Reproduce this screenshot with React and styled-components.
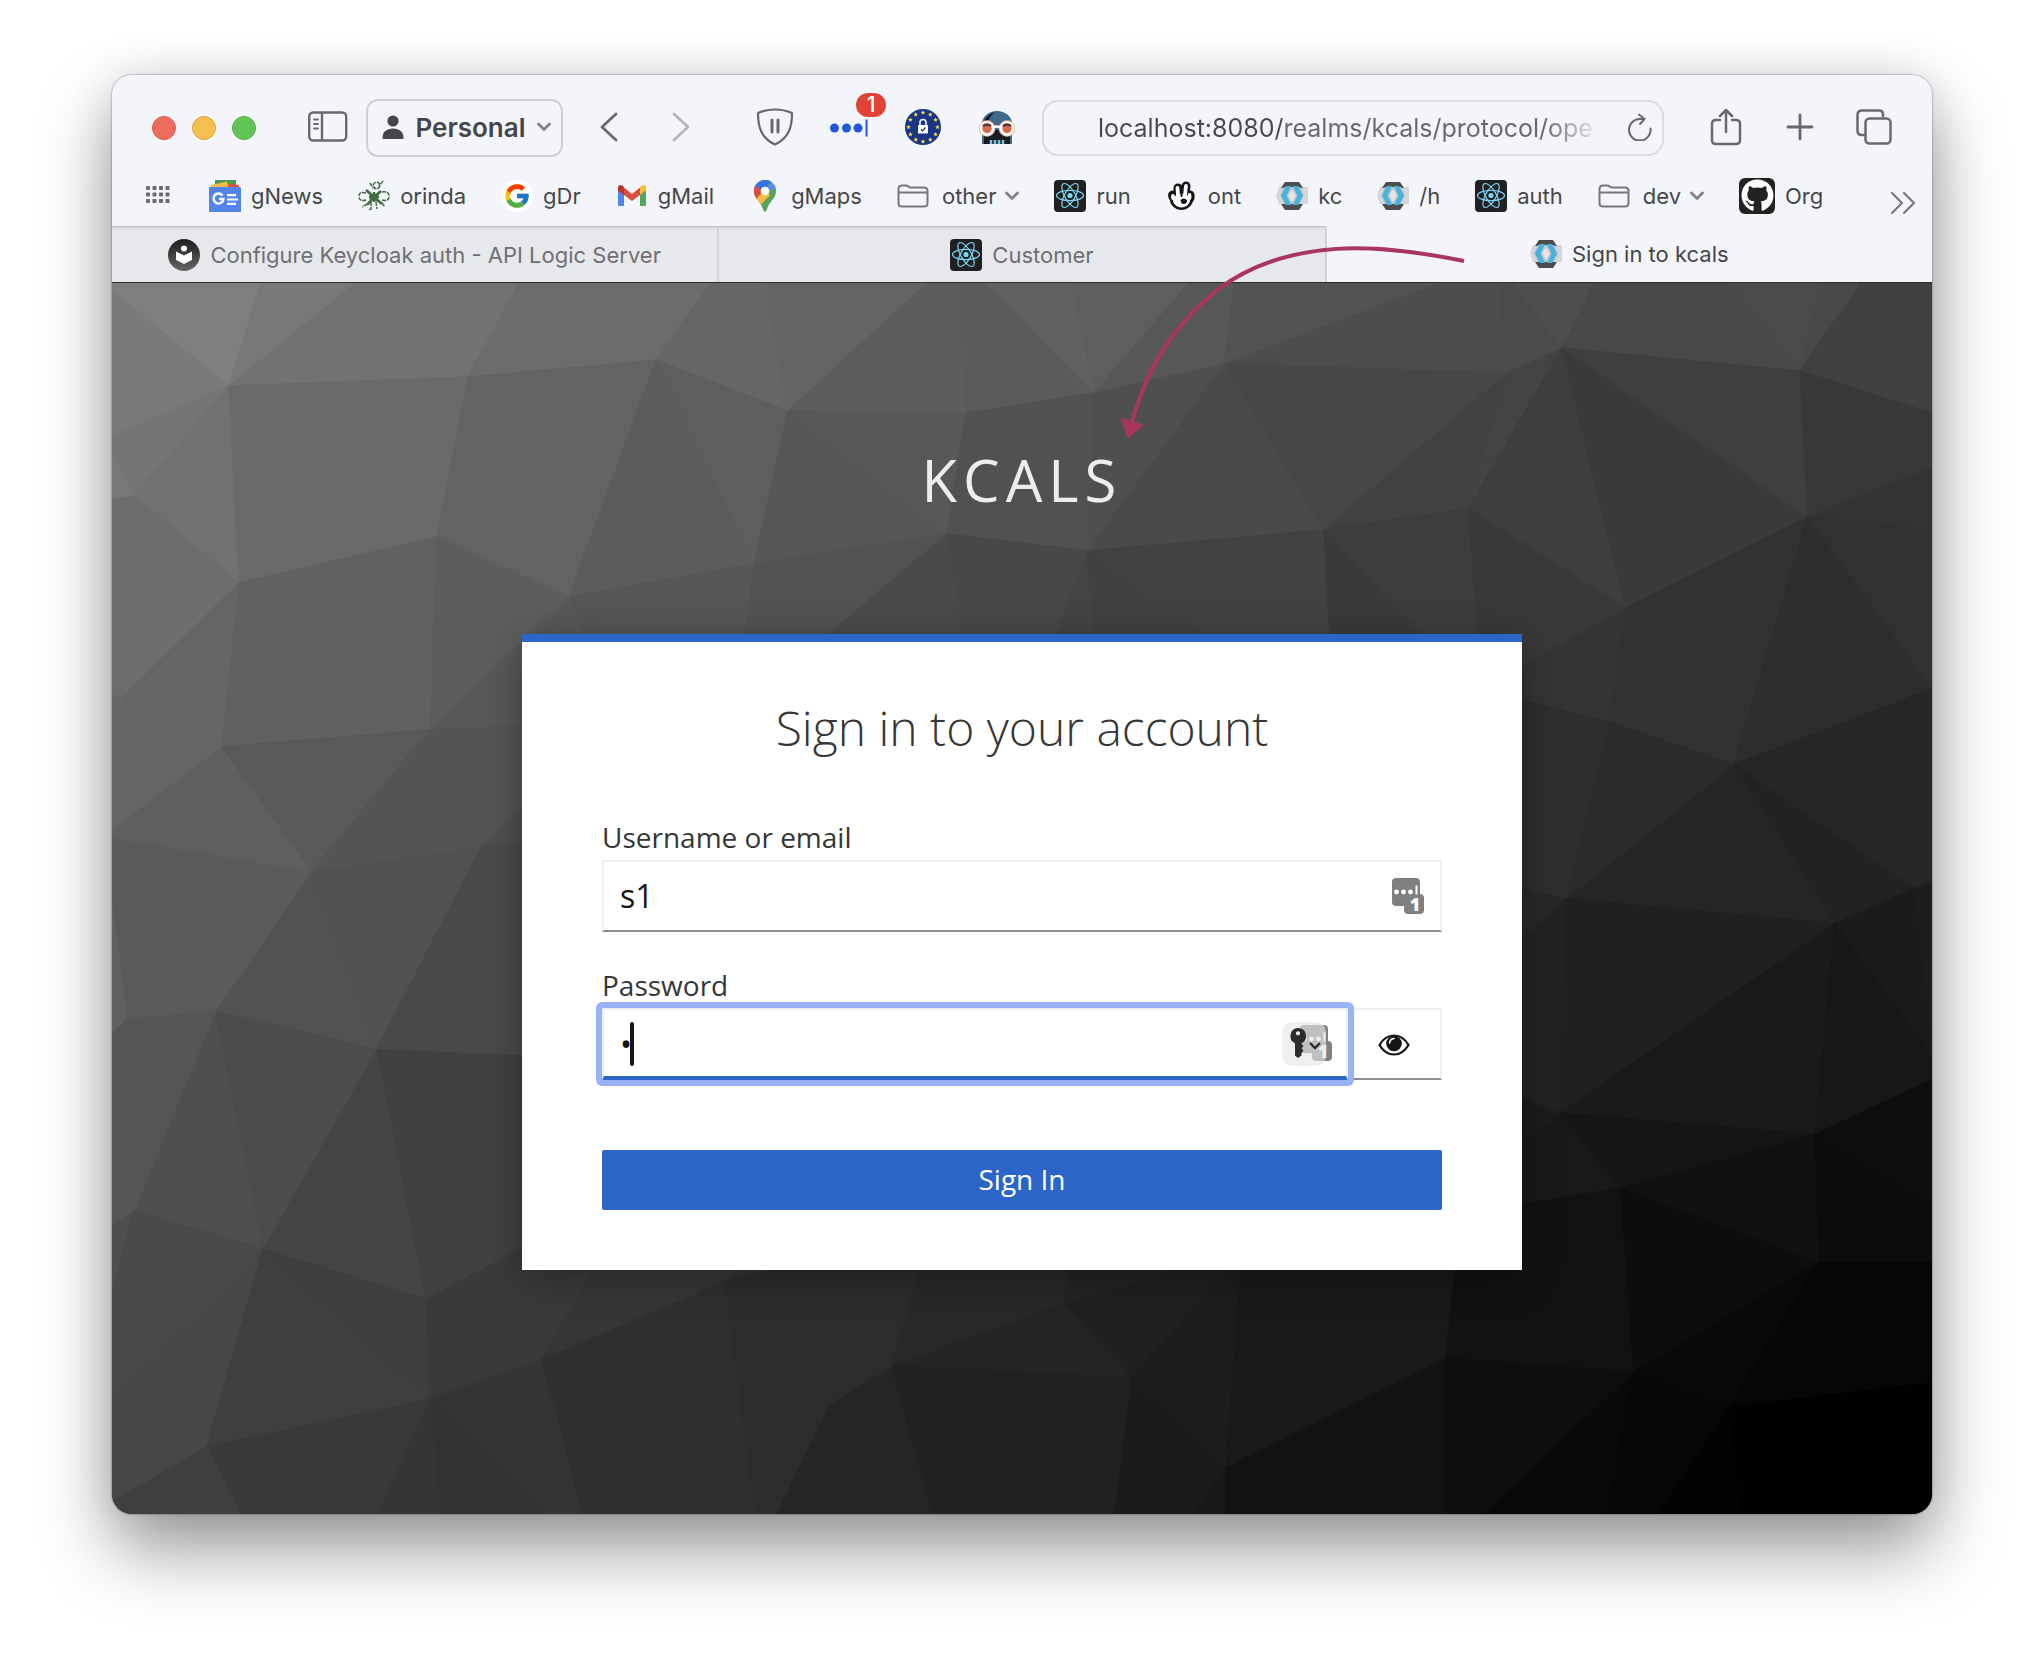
import React, { useState } from "react";
import styled, { createGlobalStyle, css } from "styled-components";
import { FaGithub } from "react-icons/fa";
import { FcGoogle } from "react-icons/fc";

const ui = `Inter, "Liberation Sans", sans-serif`;
const text = `"Open Sans", "Noto Sans", sans-serif`;

const GlobalStyle = createGlobalStyle`
  *, *::before, *::after { box-sizing: border-box; }
  body { margin: 0; background: #fff; font-family: ${ui}; }
  button, input { font: inherit; color: inherit; }
`;

/* ---------- window ---------- */

const Desktop = styled.div`
  padding: 75px 112px 148px;
`;

const BrowserWindow = styled.div`
  position: relative;
  border-radius: 20px;
  box-shadow: 0 0 2px rgba(0, 0, 0, 0.6), 0 36px 72px rgba(0, 0, 0, 0.4),
    0 0 48px rgba(0, 0, 0, 0.1);
`;

const Clip = styled.div`
  overflow: hidden;
  border-radius: 20px;
  background: #f4f5fa;
`;

const Toolbar = styled.div`
  display: flex;
  align-items: center;
  padding: 24px 38px 0 40px;
`;

const Group = styled.div`
  display: flex;
  align-items: center;
  gap: ${(p) => p.$gap}px;
  margin-right: ${(p) => p.$after || 0}px;
`;

const Light = styled.button`
  width: 24px;
  height: 24px;
  padding: 0;
  border-radius: 50%;
  border: 1px solid ${(p) => p.$edge};
  background: ${(p) => p.$fill};
`;

const IconButton = styled.button`
  position: relative;
  display: grid;
  place-items: center;
  flex: none;
  width: ${(p) => p.$width || 40}px;
  height: 44px;
  padding: 0 0 2px;
  border: 0;
  background: none;
  color: ${(p) => (p.$dim ? "#b4b5b9" : "#69696d")};
`;

const Profile = styled.button`
  display: flex;
  align-items: center;
  justify-content: space-between;
  width: 197px;
  height: 58px;
  padding: 0 10px 2px 14px;
  border: 2px solid #cfd0d3;
  border-radius: 12px;
  background: none;
  color: #464649;
  font-size: 26px;
  font-weight: 600;
`;

const Badge = styled.span`
  position: absolute;
  top: -13px;
  right: -17px;
  width: 30px;
  border-radius: 12px;
  background: #e04234;
  color: #fff;
  font-size: 21px;
  font-weight: 500;
  line-height: 24px;
  text-align: center;
`;

const Address = styled.div`
  display: flex;
  align-items: center;
  flex: 1;
  min-width: 0;
  height: 56px;
  margin-right: 42px;
  padding: 0 0 0 54px;
  border: 2px solid #d9dade;
  border-radius: 16px;
`;

const AddressInput = styled.input`
  flex: 1;
  min-width: 0;
  height: 44px;
  margin-right: 12px;
  padding: 0;
  border: 0;
  outline: 0;
  color: transparent;
  font-size: 25px;
  background: linear-gradient(90deg, #48484a 184px, #68686b 184px);
  -webkit-background-clip: text;
  background-clip: text;
  mask-image: linear-gradient(90deg, #000 calc(100% - 60px), transparent calc(100% - 4px));
`;

const Bookmarks = styled.nav`
  display: flex;
  align-items: center;
  gap: 35px;
  height: 69px;
  padding: 8px 15px 0 32px;
  color: #464649;
  font-size: 22px;
`;

const Bookmark = styled.a`
  display: flex;
  align-items: center;
  gap: ${(p) => (p.$folder ? 9 : 10)}px;
  color: inherit;
  line-height: 36px;
  text-decoration: none;
  white-space: nowrap;
`;

const Overflow = styled.div`
  display: flex;
  flex: 1;
  justify-content: flex-end;
  align-self: flex-end;
`;

const Tabs = styled.div`
  display: flex;
  height: 57px;
  border-bottom: 1px solid #2e2e2e;
`;

const Tab = styled.button`
  display: flex;
  flex: 1;
  align-items: center;
  justify-content: center;
  gap: 10px;
  min-width: 0;
  padding: 0;
  border: 0;
  background: none;
  color: #464649;
  font-size: 22px;
  white-space: nowrap;
  ${(p) =>
    !p.$active &&
    css`
      background: #e7e8ec;
      border-top: 1px solid #c0c1c5;
      border-right: 2px solid #d2d3d7;
      box-shadow: inset 0 3px 3px -2px rgba(0, 0, 0, 0.12);
      color: #6f6f73;
    `}
`;

/* ---------- login page ---------- */

const Page = styled.main`
  position: relative;
  display: flex;
  flex-direction: column;
  align-items: center;
  padding: 162px 32px 244px;
  background: #333;
  font-family: ${text};
`;

const Backdrop = styled.svg`
  position: absolute;
  inset: 0;
  width: 100%;
  height: 100%;
`;

const Realm = styled.h1`
  position: relative;
  margin: 0 0 119px;
  color: #ededed;
  font-size: 58px;
  font-weight: 400;
  line-height: 70px;
  letter-spacing: 6px;
  text-transform: uppercase;
`;

const Card = styled.form`
  position: relative;
  display: flex;
  flex-direction: column;
  width: 100%;
  max-width: 1000px;
  padding: 54px 80px 60px;
  border-top: 8px solid #2b65c7;
  background: #fff;
  color: #363636;
  box-shadow: 0 8px 36px rgba(0, 0, 0, 0.32);
`;

const Title = styled.h2`
  margin: 0 0 54px;
  font-size: 48px;
  font-weight: 300;
  line-height: 64px;
  text-align: center;
`;

const Label = styled.label`
  font-size: 28px;
  line-height: 46px;
`;

const Field = styled.div`
  position: relative;
  display: flex;
  margin-bottom: ${(p) => p.$after}px;
`;

const fieldBox = css`
  height: 72px;
  border: 2px solid #efefef;
  border-bottom-color: #8b8d92;
  background: #fff;
  color: #151515;
`;

const TextInput = styled.input`
  ${fieldBox}
  flex: 1;
  min-width: 0;
  padding: 0 80px 2px 16px;
  outline: 0;
  font-size: 32px;
  ${(p) =>
    p.$focused &&
    css`
      padding-bottom: 0;
      border-bottom: 4px solid #2b65c7;
      border-radius: 2px;
      box-shadow: 0 0 0 6px #98b2f6;
      z-index: 1;
    `}
`;

const Reveal = styled.button`
  ${fieldBox}
  display: grid;
  place-items: center;
  width: 94px;
  padding: 2px 0 0;
  border-left: 0;
`;

const Caret = styled.span`
  position: absolute;
  z-index: 2;
  top: 14px;
  left: 28px;
  width: 4px;
  height: 44px;
  border-radius: 2px;
  background: #151515;
`;

const FieldHint = styled.span`
  position: absolute;
  z-index: 2;
  top: ${(p) => p.$top}px;
  right: ${(p) => p.$right}px;
  display: flex;

  svg {
    overflow: visible;
  }
`;

const Submit = styled.button`
  height: 60px;
  padding: 0 0 2px;
  border: 0;
  border-radius: 2px;
  background: #2b65c7;
  color: #fff;
  font-size: 28px;
`;

const Pointer = styled.svg`
  position: absolute;
  top: 165px;
  left: calc(50% + 90px);
  width: 360px;
  height: 204px;
  pointer-events: none;
`;

/* ---------- icons ---------- */

const line = { fill: "none", stroke: "currentColor", strokeLinecap: "round", strokeLinejoin: "round" };

const SidebarIcon = () => (
  <svg width="40" height="32" viewBox="0 0 40 32" {...line} strokeWidth="2.4">
    <rect x="1.2" y="1.500" width="37" height="28" rx="4" />
    <path d="M14 2v27" />
    <path d="M6 8.500h4M6 13h4M6 17.500h4" strokeWidth="1.800" />
  </svg>
);
const PersonIcon = () => (
  <svg width="22" height="24" viewBox="0 0 22 24" fill="currentColor">
    <circle cx="11" cy="6" r="5.600" />
    <path d="M.5 23c0-6 4-9.500 10.500-9.500S21.500 17 21.500 23q0 1-1 1h-19q-1 0-1-1z" />
  </svg>
);
const Chevron = () => (
  <svg width="14" height="10" viewBox="0 0 14 10" {...line} stroke="#838387" strokeWidth="2.800">
    <path d="M1.500 2 7 7.500 12.500 2" />
  </svg>
);
const Arrow = ({ flip }) => (
  <svg width="18" height="30" viewBox="0 0 18 30" {...line} strokeWidth="2.800">
    <path d={flip ? "M2 2l14 13L2 28" : "M16 2 2 15l14 13"} />
  </svg>
);
const ShieldIcon = () => (
  <svg width="38" height="38" viewBox="0 0 38 38" {...line} strokeWidth="2.200">
    <path d="M2 5Q10 1.500 19 1.500T36 5C36 19 33 30 19 36.500 5 30 2 19 2 5z" />
    <path d="M16 12v12M22 12v12" strokeWidth="3" />
  </svg>
);
const DotsIcon = () => (
  <svg width="40" height="20" viewBox="0 0 40 20" fill="#2257dc">
    <circle cx="5.500" cy="11" r="4.500" />
    <circle cx="17.500" cy="11" r="4.500" />
    <circle cx="29" cy="11" r="4.500" />
    <path d="M36.500 2.500h2v17h-2z" />
  </svg>
);
const StarsIcon = () => (
  <svg width="36" height="36" viewBox="0 0 36 36">
    <circle cx="18" cy="18" r="18" fill="#1b3585" />
    {Array.from({ length: 12 }, (_, i) => {
      const a = (i * Math.PI) / 6;
      return (
        <path
          key={i}
          transform={`translate(${18 + 14.5 * Math.sin(a)} ${18 - 14.5 * Math.cos(a)})`}
          d="M0-2.300.7-.7 2.300-.6 1 .5 1.500 2.100 0 1.200-1.500 2.100-1 .5-2.300-.6-.7-.7z"
          fill="#f4de4a"
        />
      );
    })}
    <rect x="13" y="16" width="10" height="8.500" rx=".5" fill="#fff" />
    <path d="M15 16v-2.500a3 3 0 0 1 6 0V16" fill="none" stroke="#fff" strokeWidth="1.500" />
    <path d="m16 20 1.500 2 3-3.500" fill="none" stroke="#1b3585" strokeWidth="1.200" />
  </svg>
);
const RobotIcon = () => (
  <svg width="36" height="36" viewBox="0 0 36 36">
    <path d="M3 35V15A15 13 0 0 1 33 15v20z" fill="#3f6a8c" />
    <path d="M5 12Q9 5 16 3 10 8 8 15z" fill="#17191f" />
    <path d="M5 35V24q6 1 9-3h8q3 4 9 3v11z" fill="#1b1c21" />
    <path d="M12 31v4M16 31v4M20 31v4M24 31v4" stroke="#78c2e4" strokeWidth="2.500" />
    <g stroke="#f2b6a8" strokeWidth="4.500" fill="none">
      <circle cx="8" cy="19.500" r="6" />
      <circle cx="28" cy="19.500" r="6" />
    </g>
    <g stroke="#fff" strokeWidth="2.500" fill="#d8694a">
      <circle cx="8" cy="19.500" r="6" />
      <circle cx="28" cy="19.500" r="6" />
      <path d="M14 18.500q4-2 8 0" fill="none" />
    </g>
    <path d="M4 17q4-3 8 0M24 17q4-3 8 0" fill="none" stroke="#56322e" strokeWidth="2.500" />
  </svg>
);
const ReloadIcon = () => (
  <svg width="26" height="28" viewBox="0 0 26 28" {...line} strokeWidth="2">
    <path d="M23.500 15.500a10.800 10.800 0 1 1-10.800-9.500H17M12 1.500 17.500 6 13 11" />
  </svg>
);
const ShareIcon = () => (
  <svg width="32" height="38" viewBox="0 0 32 38" {...line} strokeWidth="2.500">
    <path d="M10 12H6q-4 0-4 4v16q0 4 4 4h20q4 0 4-4V16q0-4-4-4h-4M16 24V2M10 8l6-6 6 6" />
  </svg>
);
const PlusIcon = () => (
  <svg width="28" height="28" viewBox="0 0 28 28" {...line} strokeWidth="2.800">
    <path d="M14 2v24M2 14h24" />
  </svg>
);
const CopyIcon = () => (
  <svg width="36" height="36" viewBox="0 0 36 36" {...line} strokeWidth="2.500">
    <rect x="9.500" y="9.500" width="25" height="25" rx="4" />
    <path d="M8 26H6q-4.500 0-4.500-4V6q0-4.500 4.500-4.500h17q4 0 4 4V7" />
  </svg>
);
const GridIcon = () => (
  <svg width="26" height="18" viewBox="0 0 26 18" fill="#6d6d71">
    {[0, 1, 2].map((r) =>
      [0, 1, 2, 3].map((c) => <rect key={`${r}${c}`} x={c * 6.500} y={r * 6.500} width="4" height="4" rx=".8" />)
    )}
  </svg>
);
const NewsIcon = () => (
  <svg width="32" height="32" viewBox="0 0 32 32">
    <path d="M6 0h21v8H6z" fill="#4a9c54" />
    <path d="m15 3 15 2v5H15z" fill="#d9503c" />
    <path d="m2 5 16-3.500L20 9H2z" fill="#f2bd42" />
    <rect y="7" width="32" height="25" rx="1" fill="#5384ec" />
    <path d="M13.500 15.500A5 5 0 1 0 14.500 19H10" fill="none" stroke="#fff" strokeWidth="2.400" />
    <path d="M18 14h9v2.200h-9zM18 18.400h11v2.200H18zM18 22.800h9V25h-9z" fill="#fff" />
  </svg>
);
const LeafIcon = () => (
  <svg width="32" height="32" viewBox="0 0 32 32" fill="none" stroke="#3f6b41">
    <g strokeWidth="2.600">
      <path d="M16 17 8 10M16 17l7-6M16 17l-7 8M16 17l8 7M16 17v4M11 17h10" />
      <path d="M16 12v10M12 15l8 6M12 20l8-6" />
    </g>
    <g strokeWidth="1.500" strokeDasharray="4 1">
      <circle cx="18.500" cy="5.500" r="3.200" />
      <path d="M12 3l3 5M25 1l-4 5M8 13q-7-2-7 3 0 6 7 4M24 12q7-1 7 4 0 6-7 4" />
      <path d="M13 22v7l-2 1M18 22l1 7M9 24l-5 3M24 23l3 4" />
    </g>
  </svg>
);
const GoogleDisc = styled.span`
  display: grid;
  place-items: center;
  width: 32px;
  height: 32px;
  border-radius: 50%;
  background: #fff;
`;
const MailIcon = () => (
  <svg width="32" height="32" viewBox="0 0 32 32">
    <path d="M2 9v15.500Q2 26 3.500 26H8V13z" fill="#5384ec" />
    <path d="M30 9v15.500q0 1.500-1.500 1.500H24V13z" fill="#4fa65b" />
    <path d="M8 7.500 16 14l8-6.500V15l-8 6-8-6z" fill="#dd4f40" />
    <path d="M2 9V7.500Q2 5 4.500 5 6 5 8 7v8l-6-4.500z" fill="#b5352a" />
    <path d="M30 9V7.500Q30 5 27.500 5 26 5 24 7v8l6-4.500z" fill="#f2bd42" />
  </svg>
);
const PinIcon = () => (
  <svg width="32" height="32" viewBox="0 0 32 32">
    <defs>
      <clipPath id="pin">
        <path d="M16 0a11 11 0 0 1 11 11c0 8-7 10-9.500 19.500Q16 33 14.500 30.500C12 21 5 19 5 11A11 11 0 0 1 16 0z" />
      </clipPath>
    </defs>
    <g clipPath="url(#pin)">
      <path d="M0 0h32v32H0z" fill="#56a55c" />
      <path d="M4 20 24 0H4z" fill="#3a73e0" />
      <path d="M3 2.500 16 11 6 21 2 14z" fill="#d9503c" />
      <path d="M6.500 19.500 16 10l5 5-10.500 11z" fill="#f2bd42" />
      <path d="m14 12 11-12h5v8z" fill="#5a8bf0" />
      <path d="M5 4 13 11 22 0H8z" fill="#3a73e0" />
    </g>
    <circle cx="16" cy="11" r="4.300" fill="#fff" />
  </svg>
);
const FolderIcon = () => (
  <svg width="36" height="24" viewBox="0 0 36 24" {...line} stroke="#77777b" strokeWidth="2">
    <path d="M1.500 5q0-3.500 3.500-3.500h4q1.500 0 2.500 1t2.500 1H27q3.500 0 3.500 3.500v12q0 3.500-3.500 3.500H5Q1.500 22.500 1.500 19zM2 8.500h28" />
  </svg>
);
const ReactIcon = () => (
  <svg width="32" height="32" viewBox="0 0 32 32">
    <rect width="32" height="32" rx="4" fill="#202020" />
    <circle cx="16" cy="15.500" r="2.600" fill="#7cd5f5" />
    <g fill="none" stroke="#7cd5f5" strokeWidth="1.200">
      {[0, 60, 120].map((a) => (
        <ellipse key={a} cx="16" cy="15.500" rx="13.500" ry="5.200" transform={`rotate(${a} 16 15.500)`} />
      ))}
    </g>
  </svg>
);
const HandIcon = () => (
  <svg width="32" height="32" viewBox="0 0 32 32" strokeLinecap="round">
    <g stroke="#151515" fill="#151515">
      <ellipse cx="15.500" cy="20" rx="11" ry="9.500" />
      <path d="M12 15V8M19 14l1-8M7 17l-.5-2M24 18v-3" strokeWidth="9" />
    </g>
    <g stroke="#fff" fill="#fff">
      <ellipse cx="15.500" cy="20.500" rx="8" ry="6.500" />
      <path d="M12 16l-.5-8M19 15l1-9M7 18v-2M23.500 18v-3" strokeWidth="3.800" />
    </g>
    <path d="M14.500 20q3-3 6.500 0 0 4.500-4 4-2.500-1-2.500-4z" fill="#151515" />
    <path d="M15.500 9v7" stroke="#151515" strokeWidth="2" />
  </svg>
);
const KeycloakIcon = () => (
  <svg width="32" height="32" viewBox="0 0 32 32">
    <path d="M3 7h29v17H3L0 15.500z" fill="#d6d6d6" />
    <path d="M9 2h14l4 6H5z" fill="#4d4d4d" />
    <path d="M5 24h22l-4 6H9z" fill="#4d4d4d" />
    <path d="M8 7h16l4 8.500-4 8.500H8l-4-8.500z" fill="#b9c3c8" />
    <path d="M10 6h5l-4.500 9.500L15 25h-5l-5-9.500z" fill="#45b3dd" />
    <path d="M22 6h-5l4.500 9.500L17 25h5l5-9.500z" fill="#45b3dd" />
    <path d="m16 9 4 6.500-4 7-4-7z" fill="#e4e4e4" />
  </svg>
);
const GithubTile = styled.span`
  display: grid;
  place-items: center;
  width: 36px;
  height: 36px;
  border-radius: 6px;
  background: #222;
  color: #fff;
`;
const MoreIcon = () => (
  <svg width="26" height="24" viewBox="0 0 26 24" {...line} stroke="#77777b" strokeWidth="2.200">
    <path d="M2 2l10 10L2 22M14 2l10 10-10 10" />
  </svg>
);
const BookIcon = () => (
  <svg width="32" height="32" viewBox="0 0 32 32">
    <defs>
      <linearGradient id="book" x1="0" y1="0" x2="0" y2="1">
        <stop stopColor="#1c1c1c" />
        <stop offset="1" stopColor="#666" />
      </linearGradient>
    </defs>
    <circle cx="16" cy="16" r="16" fill="url(#book)" />
    <circle cx="16" cy="9.500" r="3" fill="#fff" />
    <path d="m8 12.500 8 4 8-4V21l-8 4-8-4z" fill="#fff" />
  </svg>
);
const VaultShape = () => (
  <g>
    <path d="M4 0h20q4 0 4 4v12q4 0 4 4v12q0 4-4 4H16q-4 0-4-4v-4H4q-4 0-4-4V4q0-4 4-4z" fill="#808080" />
    <g fill="#fff">
      <circle cx="4.500" cy="14" r="2.400" />
      <circle cx="11.500" cy="14" r="2.400" />
      <circle cx="18.500" cy="14" r="2.400" />
      <path d="M23.500 7.500h2v9h-2z" />
      <text x="23" y="33" fontFamily='"Open Sans", sans-serif' fontWeight="800" fontSize="18" textAnchor="middle">1</text>
    </g>
  </g>
);
const VaultIcon = () => (
  <svg width="32" height="36" viewBox="0 0 32 36"><VaultShape /></svg>
);
const KeyMenuIcon = () => (
  <svg width="50" height="44" viewBox="0 0 50 44">
    <g transform="translate(18 3)"><VaultShape /></g>
    <rect width="44" height="44" rx="10" fill="#e6e6e6" fillOpacity=".63" />
    <path
      d="M16 6a8 8 0 0 1 3.500 15.200V22l2 2-2 2.500 2 2-2 2.500v2.500L16 36l-3-2.500V21.200A8 8 0 0 1 16 6zm0 3.200a2 2 0 1 0 0 4.200 2 2 0 0 0 0-4.200z"
      fill="#2c2c2c"
      fillRule="evenodd"
    />
    <path d="m28 21 5 5 5-5" fill="none" stroke="#2c2c2c" strokeWidth="2.400" />
  </svg>
);
const EyeIcon = () => (
  <svg width="32" height="22" viewBox="0 0 32 22">
    <path d="M1.500 11Q7 1.500 16 1.500T30.500 11Q25 20.500 16 20.500T1.500 11z" fill="#fff" stroke="#151515" strokeWidth="2.200" />
    <circle cx="16" cy="9.500" r="7.800" fill="#151515" />
    <path d="M11.500 9q.5-4 4.500-4.500" fill="none" stroke="#fff" strokeWidth="1.600" strokeLinecap="round" />
  </svg>
);

/* ---------- low-poly backdrop: [grey level, points] ---------- */

const facets = [
  [127, "0,0 149,0 117,103 0,8"], [122, "0,8 117,103 0,153"], [120, "149,0 244,0 117,103"],
  [114, "244,0 407,0 356,94 117,103"], [108, "407,0 599,0 544,77 356,94"], [102, "599,0 654,0 676,128 544,77"],
  [100, "654,0 815,0 676,128"], [93, "815,0 847,0 854,130 676,128"], [91, "847,0 874,0 982,110 854,130"],
  [97, "874,0 961,0 982,110"], [94, "961,0 1077,0 982,110"], [87, "1077,0 1122,0 1113,81 982,110"],
  [83, "1122,0 1328,0 1113,81"], [77, "1328,0 1388,0 1396,90 1113,81"], [75, "1388,0 1402,0 1450,65 1396,90"],
  [79, "1402,0 1482,0 1450,65"], [73, "1482,0 1617,0 1688,88 1450,65"], [75, "1617,0 1709,0 1688,88"],
  [73, "1709,0 1749,0 1688,88"], [65, "1749,0 1820,0 1820,130 1688,88"],
  [117, "0,153 117,103 22,213 0,170"], [120, "0,170 22,213 0,217"], [113, "117,103 127,300 22,213"],
  [106, "117,103 356,94 325,254 127,300"], [99, "356,94 544,77 457,314 325,254"], [92, "544,77 642,281 457,314"],
  [94, "544,77 676,128 642,281"], [86, "676,128 835,251 642,281"], [88, "676,128 854,130 835,251"],
  [81, "854,130 982,110 976,268 835,251"], [79, "982,110 1113,81 976,268"], [74, "1113,81 1212,247 976,268"],
  [71, "1113,81 1396,90 1212,247"], [66, "1396,90 1356,226 1212,247"], [68, "1396,90 1450,65 1356,226"],
  [62, "1450,65 1514,325 1356,226"], [58, "1450,65 1696,234 1514,325"], [63, "1450,65 1688,88 1696,234"],
  [56, "1688,88 1820,130 1820,185 1696,234"], [51, "1820,185 1820,248 1696,234"],
  [108, "0,217 22,213 12,413 0,414"], [109, "22,213 127,300 12,413"], [102, "127,300 110,464 12,413"],
  [97, "127,300 325,254 318,447 110,464"], [93, "325,254 457,314 318,447"],
  [88, "318,447 457,314 480,380 410,444"], [88, "457,314 473,352 473,400 410,380"], [85, "457,314 510,352 473,352"],
  [86, "457,314 642,281 632,360 520,360"], [82, "642,281 835,251 714,360 632,360"],
  [74, "835,251 853,360 706,360"], [72, "835,251 976,268 943,360 853,360"], [68, "976,268 981,360 941,360"],
  [65, "976,268 1093,352 1093,360 981,360"], [66, "976,268 1212,247 1218,360 1100,360"],
  [58, "1212,247 1318,360 1218,360"], [61, "1212,247 1356,226 1367,360 1318,360"],
  [57, "1356,226 1514,325 1400,392 1367,360"], [52, "1514,325 1497,439 1400,415 1400,390"],
  [50, "1514,325 1622,482 1497,439"], [49, "1514,325 1696,234 1622,482"], [45, "1696,234 1820,406 1622,482"],
  [49, "1696,234 1820,248 1820,406"], [38, "1622,482 1820,406 1820,600 1802,606"], [34, "1622,482 1802,606 1723,641"],
  [37, "1622,482 1723,641 1454,616"], [43, "1497,439 1622,482 1454,616"], [46, "1400,415 1497,439 1454,616 1400,605"],
  [40, "1400,605 1454,616 1400,666"], [35, "1454,616 1448,831 1400,812 1400,666"], [32, "1454,616 1723,641 1448,831"],
  [26, "1723,641 1703,852 1448,831"], [23, "1723,641 1820,771 1820,797 1703,852"], [27, "1723,641 1802,606 1820,771"],
  [29, "1802,606 1820,600 1820,771"], [21, "1448,831 1703,852 1508,906"], [25, "1448,831 1508,906 1400,924 1400,870"],
  [28, "1448,831 1400,870 1400,812"], [17, "1508,906 1703,852 1707,980"], [14, "1703,852 1820,797 1820,922"],
  [12, "1703,852 1820,922 1820,980 1707,980"], [13, "1508,906 1707,980 1521,1090"],
  [18, "1508,906 1521,1090 1333,1076 1343,980 1400,924"], [9, "1707,980 1617,1125 1521,1090"],
  [6, "1707,980 1820,980 1820,1101 1617,1125"], [1, "1617,1125 1820,1101 1820,1232 1629,1232"],
  [3, "1617,1125 1629,1232 1544,1232"], [7, "1521,1090 1617,1125 1544,1232 1495,1232"],
  [9, "1521,1090 1495,1232 1371,1232"], [14, "1333,1076 1521,1090 1371,1232 1331,1232"],
  [18, "1333,1076 1331,1232 1113,1232 1113,1185"], [25, "1129,980 1343,980 1333,1076 1113,1185"],
  [29, "1122,980 1129,980 1113,1185 1019,1095"], [32, "951,1022 1090,980 1122,980 1019,1095"],
  [36, "957,980 1090,980 951,1022"], [24, "1113,1185 1113,1232 1081,1232"], [27, "1019,1095 1113,1185 1081,1232 1002,1232"],
  [33, "1019,1095 1002,1232 913,1232"], [40, "809,980 957,980 951,1022 779,1084"], [36, "779,1084 951,1022 1019,1095"],
  [33, "779,1084 1019,1095 913,1232 820,1232"], [37, "779,1084 820,1232 664,1232 717,1123"],
  [44, "612,999 694,980 809,980 779,1084 717,1123 664,1232 643,1232"], [47, "612,999 643,1232 470,1232 429,1077"],
  [52, "429,1077 470,1232 433,1232 318,1116"], [50, "318,1116 433,1232 329,1232"], [53, "318,1116 329,1232 265,1232"],
  [57, "318,1116 265,1232 129,1232 95,1164"], [63, "95,1164 129,1232 0,1232 0,1219"], [71, "0,1142 95,1164 0,1219"],
  [72, "151,966 95,1164 0,1142 0,1114"], [63, "151,966 318,1116 95,1164"], [62, "151,966 314,1016 318,1116"],
  [58, "314,1016 420,960 487,980 429,1077 318,1116"], [54, "487,980 640,980 612,999 429,1077"],
  [69, "265,766 314,1016 151,966"], [65, "265,766 420,773 420,960 314,1016"], [79, "104,728 151,966 22,929"],
  [76, "104,728 265,766 151,966"], [85, "15,736 104,728 22,929 0,944 0,750"], [79, "22,929 0,1012 0,944"],
  [74, "22,929 151,966 0,1114 0,1012"], [82, "200,589 265,766 104,728"], [81, "200,589 370,563 265,766"],
  [74, "370,563 420,555 420,773 265,766"], [90, "0,555 200,589 104,728 15,736 0,620"], [96, "0,620 15,736 0,750"],
  [95, "110,464 200,589 0,555 0,547"], [101, "12,413 110,464 0,547"], [103, "0,414 12,413 0,547"],
  [89, "110,464 318,447 200,589"], [84, "318,447 370,563 200,589"], [84, "318,447 420,443 420,520 370,563"],
  [79, "370,563 420,517 420,560"],
];

const LowPoly = () => (
  <Backdrop viewBox="0 0 1820 1232" preserveAspectRatio="none" aria-hidden="true">
    {facets.map(([g, points], i) => {
      const fill = `rgb(${g},${g},${g})`;
      return <polygon key={i} points={points} fill={fill} stroke={fill} strokeWidth="1" />;
    })}
  </Backdrop>
);

/* ---------- data ---------- */

const bookmarks = [
  { label: "gNews", icon: <NewsIcon /> },
  { label: "orinda", icon: <LeafIcon /> },
  { label: "gDr", icon: <GoogleDisc><FcGoogle size={28} /></GoogleDisc> },
  { label: "gMail", icon: <MailIcon /> },
  { label: "gMaps", icon: <PinIcon /> },
  { label: "other", icon: <FolderIcon />, folder: true },
  { label: "run", icon: <ReactIcon /> },
  { label: "ont", icon: <HandIcon /> },
  { label: "kc", icon: <KeycloakIcon /> },
  { label: "/h", icon: <KeycloakIcon /> },
  { label: "auth", icon: <ReactIcon /> },
  { label: "dev", icon: <FolderIcon />, folder: true },
  { label: "Org", icon: <GithubTile><FaGithub size={33} /></GithubTile> },
];

const tabs = [
  { label: "Configure Keycloak auth - API Logic Server", icon: <BookIcon /> },
  { label: "Customer", icon: <ReactIcon /> },
  { label: "Sign in to kcals", icon: <KeycloakIcon />, active: true },
];

export default function App() {
  const [url, setUrl] = useState("localhost:8080/realms/kcals/protocol/ope");
  const [user, setUser] = useState("s1");
  const [password, setPassword] = useState("x");

  return (
    <Desktop>
      <GlobalStyle />
      <BrowserWindow>
        <Clip>
          <Toolbar>
            <Group $gap={16} $after={52}>
              <Light aria-label="Close" $fill="#ec6a5e" $edge="#d8574b" />
              <Light aria-label="Minimize" $fill="#f4bf4f" $edge="#dba63c" />
              <Light aria-label="Zoom" $fill="#61c554" $edge="#50ac44" />
            </Group>
            <Group $gap={18} $after={30}>
              <IconButton aria-label="Sidebar"><SidebarIcon /></IconButton>
              <Profile><PersonIcon />Personal<Chevron /></Profile>
            </Group>
            <Group $gap={40} $after={58}>
              <IconButton $width={32} aria-label="Back"><Arrow /></IconButton>
              <IconButton $width={32} $dim aria-label="Forward"><Arrow flip /></IconButton>
            </Group>
            <Group $gap={34} $after={25}>
              <IconButton aria-label="Content blocker"><ShieldIcon /></IconButton>
              <IconButton aria-label="Passwords"><DotsIcon /><Badge>1</Badge></IconButton>
              <IconButton aria-label="Privacy"><StarsIcon /></IconButton>
              <IconButton aria-label="Robot"><RobotIcon /></IconButton>
            </Group>
            <Address>
              <AddressInput aria-label="Address" value={url} onChange={(e) => setUrl(e.target.value)} />
              <IconButton aria-label="Reload" $width={44}><ReloadIcon /></IconButton>
            </Address>
            <Group $gap={34}>
              <IconButton aria-label="Share"><ShareIcon /></IconButton>
              <IconButton aria-label="New tab"><PlusIcon /></IconButton>
              <IconButton aria-label="Tab overview"><CopyIcon /></IconButton>
            </Group>
          </Toolbar>

          <Bookmarks aria-label="Favorites">
            <IconButton $width={30} aria-label="All favorites"><GridIcon /></IconButton>
            {bookmarks.map((b) => (
              <Bookmark key={b.label} href="#" $folder={b.folder}>
                {b.icon}
                {b.label}
                {b.folder && <Chevron />}
              </Bookmark>
            ))}
            <Overflow>
              <IconButton $width={28} aria-label="More favorites"><MoreIcon /></IconButton>
            </Overflow>
          </Bookmarks>

          <Tabs role="tablist">
            {tabs.map((t) => (
              <Tab key={t.label} role="tab" aria-selected={!!t.active} $active={t.active}>
                {t.icon}
                {t.label}
              </Tab>
            ))}
          </Tabs>

          <Page>
            <LowPoly />
            <Realm>kcals</Realm>
            <Card onSubmit={(e) => e.preventDefault()}>
              <Title>Sign in to your account</Title>
              <Label htmlFor="username">Username or email</Label>
              <Field $after={30}>
                <TextInput id="username" value={user} onChange={(e) => setUser(e.target.value)} />
                <FieldHint $top={18} $right={18}><VaultIcon /></FieldHint>
              </Field>
              <Label htmlFor="password">Password</Label>
              <Field $after={70}>
                <TextInput
                  id="password"
                  type="password"
                  value={password}
                  onChange={(e) => setPassword(e.target.value)}
                  $focused
                />
                <Caret />
                <FieldHint $top={14} $right={110}><KeyMenuIcon /></FieldHint>
                <Reveal type="button" aria-label="Show password"><EyeIcon /></Reveal>
              </Field>
              <Submit type="submit">Sign In</Submit>
            </Card>
          </Page>
        </Clip>
        <Pointer viewBox="1112 240 360 204" aria-hidden="true">
          <path
            d="M1464 261C1380 244 1290 236 1217 290 1188 314 1152 350 1132 422"
            fill="none"
            stroke="#a8365e"
            strokeWidth="4"
          />
          <path d="M1121 418l22 7-15 13z" fill="#a8365e" stroke="#a8365e" strokeWidth="1" />
        </Pointer>
      </BrowserWindow>
    </Desktop>
  );
}
